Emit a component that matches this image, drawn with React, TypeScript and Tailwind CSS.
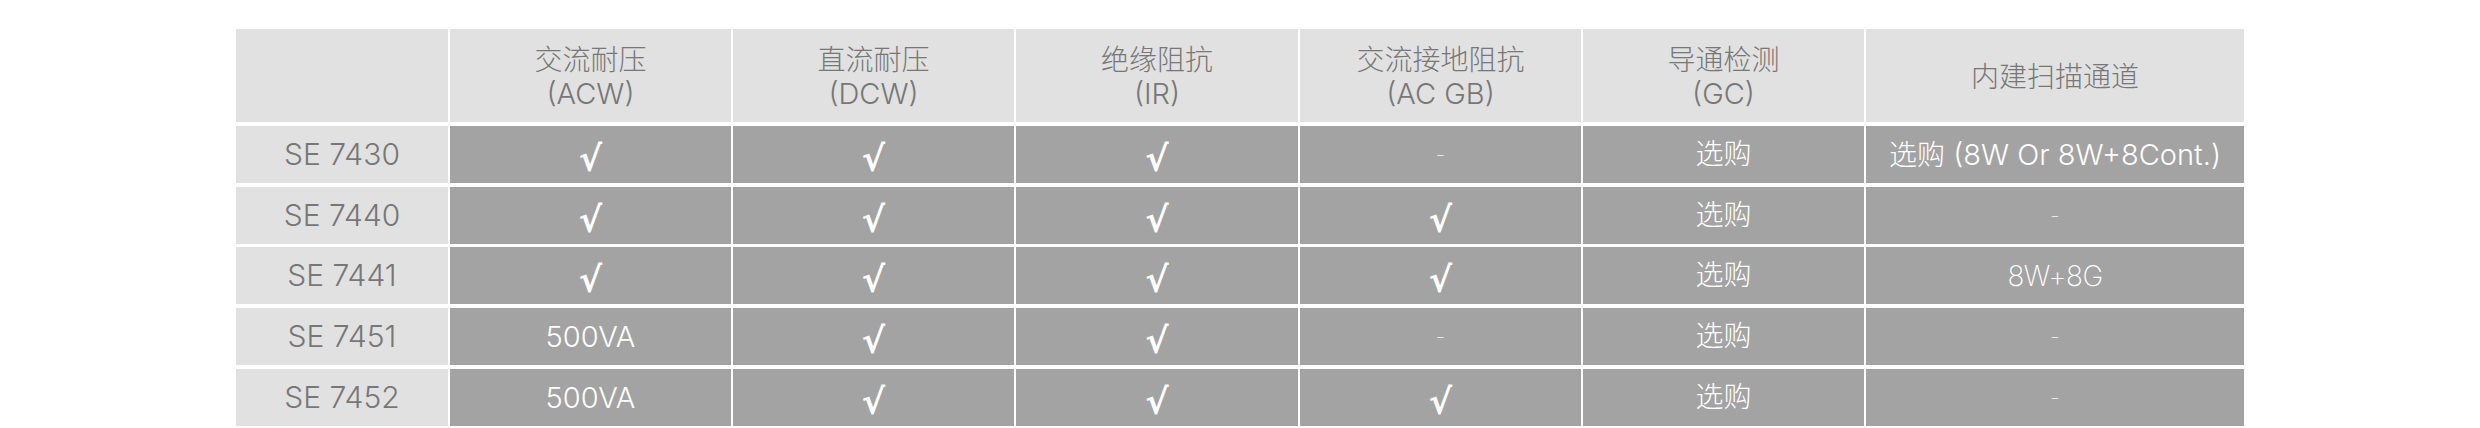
import React from 'react';

const latin = "font-['Inter','Noto_Sans_CJK_SC',sans-serif]";
const cjk = "font-['Noto_Sans_CJK_SC','Noto_Sans',sans-serif]";

type Cell = 'check' | 'dash' | string;

const headers: { zh: string; en?: string }[] = [
  { zh: '交流耐压', en: '(ACW)' },
  { zh: '直流耐压', en: '(DCW)' },
  { zh: '绝缘阻抗', en: '(IR)' },
  { zh: '交流接地阻抗', en: '(AC GB)' },
  { zh: '导通检测', en: '(GC)' },
  { zh: '内建扫描通道' },
];

const rows: { model: string; cells: Cell[] }[] = [
  { model: 'SE 7430', cells: ['check', 'check', 'check', 'dash', '选购', 'opt8w'] },
  { model: 'SE 7440', cells: ['check', 'check', 'check', 'check', '选购', 'dash'] },
  { model: 'SE 7441', cells: ['check', 'check', 'check', 'check', '选购', '8W+8G'] },
  { model: 'SE 7451', cells: ['500VA', 'check', 'check', 'dash', '选购', 'dash'] },
  { model: 'SE 7452', cells: ['500VA', 'check', 'check', 'check', '选购', 'dash'] },
];

const CellContent: React.FC<{ value: Cell }> = ({ value }) => {
  if (value === 'check') {
    return (
      <span className="font-['Noto_Sans','DejaVu_Sans',sans-serif] text-[35px] font-bold text-white leading-none mt-[6px]">
        √
      </span>
    );
  }
  if (value === 'dash') {
    return <span className={`${latin} text-[22px] font-extralight text-[#e8e8e8]`}>-</span>;
  }
  if (value === '选购') {
    return <span className={`${cjk} text-[28px] font-light text-white -mt-[5px]`}>选购</span>;
  }
  if (value === 'opt8w') {
    return (
      <span className="text-[29px] text-white whitespace-nowrap">
        <span className={`${cjk} font-light text-[28px]`}>选购</span>
        <span className={`${latin} font-light`}> (8W Or 8W+8Cont.)</span>
      </span>
    );
  }
  if (value === '8W+8G') {
    return <span className={`${latin} text-[28px] font-extralight text-white tracking-[-0.5px]`}>{value}</span>;
  }
  return <span className={`${latin} text-[29px] font-light text-white`}>{value}</span>;
};

export default function App() {
  return (
    <div className="min-h-screen bg-white pt-[29px] flex justify-center">
      <div className="grid grid-cols-[212px_281px_281px_282px_281px_281px_378px] gap-[2px] bg-white">
        {/* header */}
        <div className="h-[93px] bg-[#e1e1e1]" />
        {headers.map((h) => (
          <div
            key={h.zh}
            className="h-[93px] bg-[#e1e1e1] flex flex-col items-center justify-center text-[#777777] leading-[35px]"
          >
            <span className={`${cjk} font-light text-[28px]`}>{h.zh}</span>
            {h.en && <span className={`${latin} font-light text-[29px]`}>{h.en}</span>}
          </div>
        ))}

        {rows.map((r) => (
          <React.Fragment key={r.model}>
            <div className={`h-[57px] bg-[#e1e1e1] flex items-center justify-center text-[30px] font-light text-[#777777] ${latin}`}>
              {r.model}
            </div>
            {r.cells.map((c, i) => (
              <div key={i} className="h-[57px] bg-[#a3a3a3] flex items-center justify-center overflow-hidden">
                <CellContent value={c} />
              </div>
            ))}
          </React.Fragment>
        ))}
      </div>
    </div>
  );
}
